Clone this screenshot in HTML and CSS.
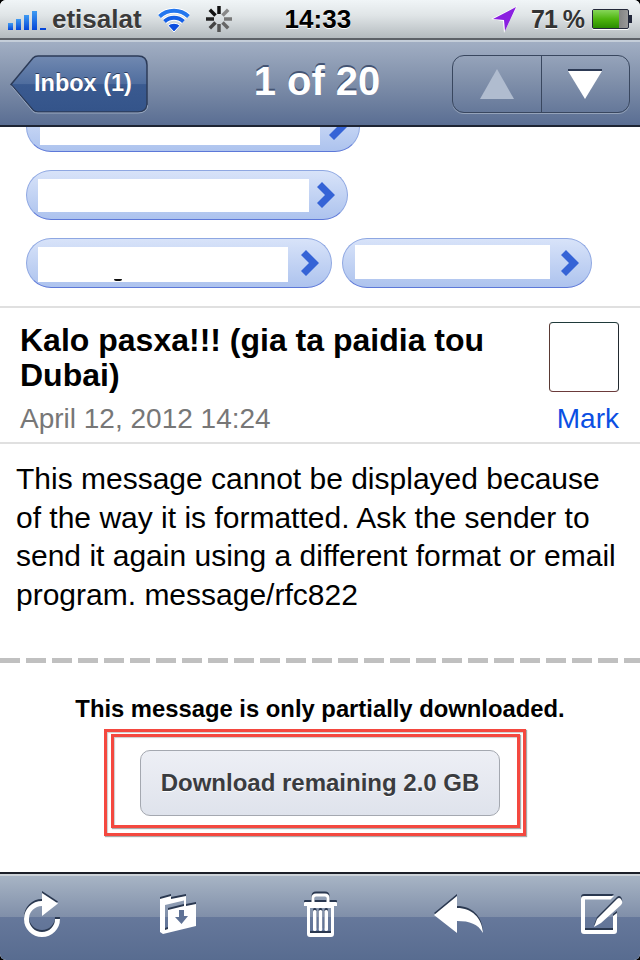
FILE: index.html
```html
<!DOCTYPE html>
<html lang="en">
<head>
    <meta charset="UTF-8">
    <meta name="viewport" content="width=device-width, initial-scale=1.0">
    <title>Message</title>
    <link rel="stylesheet" href="styles.css">
</head>
<body>
<div class="phone">
    <!-- Status bar -->
    <div class="status-bar">
        <svg class="signal" width="38" height="20" viewBox="0 0 38 20">
            <defs>
                <linearGradient id="barBlue" x1="0" y1="0" x2="0" y2="1">
                    <stop offset="0" stop-color="#3f9bf2"/>
                    <stop offset="1" stop-color="#0546d8"/>
                </linearGradient>
            </defs>
            <rect x="0" y="13" width="5" height="7" fill="url(#barBlue)"/>
            <rect x="8" y="9" width="5" height="11" fill="url(#barBlue)"/>
            <rect x="16" y="5" width="5" height="15" fill="url(#barBlue)"/>
            <rect x="24" y="1" width="5" height="19" fill="url(#barBlue)"/>
            <rect x="32" y="18" width="6" height="2" fill="#0546d8"/>
        </svg>
        <span class="carrier">etisalat</span>
        <svg class="wifi" width="32" height="25" viewBox="0 0 32 25">
            <path d="M16 25 L10 18.500 A9 9 0 0 1 22 18.500 Z" fill="#0d4ee0" stroke="#fff" stroke-width="1"/>
            <path d="M6.500 14.500 A14 14 0 0 1 25.500 14.500" fill="none" stroke="#fff" stroke-width="6"/>
            <path d="M1.500 9.500 A21 21 0 0 1 30.500 9.500" fill="none" stroke="#fff" stroke-width="6"/>
            <path d="M6.500 14.500 A14 14 0 0 1 25.500 14.500" fill="none" stroke="#1560e6" stroke-width="4"/>
            <path d="M1.500 9.500 A21 21 0 0 1 30.500 9.500" fill="none" stroke="#2477ee" stroke-width="4"/>
        </svg>
        <svg class="spinner" width="28" height="28" viewBox="0 0 28 28" stroke-width="3.500">
            <path d="M14 1 V9" stroke="#111"/>
            <path d="M23.200 4.800 L17.500 10.500" stroke="#888"/>
            <path d="M27 14 H19" stroke="#777"/>
            <path d="M23.200 23.200 L17.500 17.500" stroke="#666"/>
            <path d="M14 27 V19" stroke="#555"/>
            <path d="M4.800 23.200 L10.500 17.500" stroke="#444"/>
            <path d="M1 14 H9" stroke="#222"/>
            <path d="M4.800 4.800 L10.500 10.500" stroke="#111"/>
        </svg>
        <span class="clock">14:33</span>
        <svg class="location" width="26" height="27" viewBox="0 0 26 27">
            <path d="M26 0 L0 13 L12 15 L13 27 Z" fill="#fff"/>
            <path d="M25 1 L2 13 L13 14 L14 25 Z" fill="#8a1fe0"/>
        </svg>
        <span class="battery-text">71 %</span>
        <div class="battery"><div class="battery-fill"></div></div>
        <div class="battery-tip"></div>
    </div>

    <!-- Navigation bar -->
    <div class="nav-bar">
        <div class="back-button">
            <svg class="back-shape" width="138" height="59" viewBox="0 0 138 59">
                <defs>
                    <linearGradient id="backBlue" x1="0" y1="0" x2="0" y2="1">
                        <stop offset="0" stop-color="#7189b1"/>
                        <stop offset="0.5" stop-color="#4f6d9e"/>
                        <stop offset="0.51" stop-color="#3a5a90"/>
                        <stop offset="1" stop-color="#34548a"/>
                    </linearGradient>
                </defs>
                <path d="M1 29.500 L23 3 Q25 1 28 1 H128 Q137 1 137 10 V49 Q137 57 128 57 H28 Q25 57 23 55 Z" fill="url(#backBlue)" stroke="#2c3b58" stroke-width="1.500"/>
                <path d="M1 30.500 L23 56.500 Q25 58 28 58 H128 Q137 58 138 50" fill="none" stroke="#9aa9c0" stroke-width="1"/>
            </svg>
            <span class="back-label">Inbox (1)</span>
        </div>
        <div class="nav-title">1 of 20</div>
        <div class="segmented">
            <div class="segment">
                <svg width="34" height="30" viewBox="0 0 34 30"><path d="M17 0 L34 30 H0 Z" fill="#b0bccf"/></svg>
            </div>
            <div class="segment segment-next">
                <svg width="34" height="30" viewBox="0 0 34 30"><path d="M0 0 H34 L34 2 L17 30 L0 2 Z" fill="#fff"/><path d="M0 0 H34 V2 H0 Z" fill="#2d3a55"/></svg>
            </div>
        </div>
    </div>

    <!-- Message -->
    <div class="message">
        <div class="recipients">
            <div class="pill-row">
                <div class="pill pill-first">
                    <div class="pill-blank blank-first"></div>
                    <svg class="chevron" width="18" height="26" viewBox="0 0 18 26"><path d="M5 0 L18 13 L5 26 L0 21 L8 13 L0 5 Z" fill="#3563d6"/></svg>
                </div>
            </div>
            <div class="pill-row">
                <div class="pill pill-second">
                    <div class="pill-blank blank-second"></div>
                    <svg class="chevron" width="18" height="26" viewBox="0 0 18 26"><path d="M5 0 L18 13 L5 26 L0 21 L8 13 L0 5 Z" fill="#3563d6"/></svg>
                </div>
            </div>
            <div class="pill-row">
                <div class="pill pill-third">
                    <div class="pill-blank blank-third"></div>
                    <svg class="chevron" width="18" height="26" viewBox="0 0 18 26"><path d="M5 0 L18 13 L5 26 L0 21 L8 13 L0 5 Z" fill="#3563d6"/></svg>
                    <span class="ink-mark"></span>
                </div>
                <div class="pill pill-fourth">
                    <div class="pill-blank blank-fourth"></div>
                    <svg class="chevron" width="18" height="26" viewBox="0 0 18 26"><path d="M5 0 L18 13 L5 26 L0 21 L8 13 L0 5 Z" fill="#3563d6"/></svg>
                </div>
            </div>
        </div>

        <div class="header">
            <div class="header-text">
                <h1>Kalo pasxa!!! (gia ta paidia tou Dubai)</h1>
                <div class="date">April 12, 2012 14:24</div>
            </div>
            <div class="sender">
                <div class="avatar"></div>
                <div class="sender-name">Mark</div>
            </div>
        </div>

        <p class="body-text">This message cannot be displayed because of the way it is formatted. Ask the sender to send it again using a different format or email program. message/rfc822</p>

        <div class="dashed"></div>

        <p class="partial">This message is only partially downloaded.</p>
        <div class="highlight">
            <div class="highlight-inner">
                <div class="download-button">Download remaining 2.0 GB</div>
            </div>
        </div>
    </div>

    <!-- Toolbar -->
    <div class="toolbar">
        <svg class="tool-icon tool-refresh" width="36" height="44" viewBox="0 0 36 44">
            <path d="M33.500 26 A15.500 15.500 0 1 1 18 10.500" fill="none" stroke="#fff" stroke-width="5"/>
            <path d="M18 0 L34 10.500 L18 23 Z" fill="#fff"/>
        </svg>
        <svg class="tool-icon tool-folder" width="36" height="38" viewBox="0 0 36 38">
            <path d="M0 3 L11 0 V3 L26 0 V10 L36 8 V30 L3 38 L0 36 Z M5 9 L24 4.500 V10 L8 14 V33 L5 34 Z" fill="#fff" fill-rule="evenodd"/>
            <path d="M19 14 H24 V20 H28 L21.500 28 L15 21 H19 Z" fill="#5f7296"/>
        </svg>
        <svg class="tool-icon tool-trash" width="33" height="44" viewBox="0 0 33 44">
            <path d="M0 10 Q0 9 1 9 H32 Q33 9 33 10 V13 H0 Z" fill="#fff"/>
            <path d="M9 9 V5 Q9 2 12 2 H21 Q24 2 24 5 V9" fill="none" stroke="#fff" stroke-width="3"/>
            <path d="M3 13 H30 V41 Q30 44 27 44 H6 Q3 44 3 41 Z M6 15 V40 H27 V15 Z" fill="#fff" fill-rule="evenodd"/>
            <rect x="9" y="17" width="3.500" height="21" rx="1.500" fill="#fff"/>
            <rect x="14.750" y="17" width="3.500" height="21" rx="1.500" fill="#fff"/>
            <rect x="20.500" y="17" width="3.500" height="21" rx="1.500" fill="#fff"/>
        </svg>
        <svg class="tool-icon tool-reply" width="50" height="38" viewBox="0 0 50 38">
            <path d="M23 0 V12 C38 12 48 22 49 37 C44 28 36 25 23 25 V37 L0 19 Z" fill="#fff"/>
        </svg>
        <svg class="tool-icon tool-compose" width="42" height="38" viewBox="0 0 42 38">
            <path d="M3 0 H33 L29.500 3.500 H4 V34 H32 V20 L36 17 V35 Q36 38 33 38 H3 Q0 38 0 35 V3 Q0 0 3 0 Z" fill="#fff"/>
            <path d="M36 3 Q38 1 40 3 L41 5 Q42 7 40 9 L20 27 L13 31 L16 23 Z" fill="#fff"/>
        </svg>
    </div>
</div>
</body>
</html>
```

FILE: styles.css
```css
html, body {
    margin: 0;
    padding: 0;
    background: #000;
}

body {
    font-family: 'Liberation Sans', Arial, sans-serif;
    color: #000;
}

.phone {
    width: 640px;
    height: 960px;
    display: flex;
    flex-direction: column;
    overflow: hidden;
    border-radius: 6px;
    background: #fff;
}

/* Status bar */
.status-bar {
    height: 38px;
    flex: none;
    display: flex;
    align-items: center;
    padding-left: 8px;
    background: linear-gradient(to bottom, #f0f5f7, #e0e5e7 40%, #b4bbbf);
    border-bottom: 2px solid #5d6268;
    color: #333;
}

.signal {
    margin-top: 1px;
}

.carrier {
    margin-left: 6px;
    font-size: 26px;
    font-weight: bold;
    color: #3a3a3a;
    text-shadow: 0 1px 0 #fff;
}

.wifi {
    margin-left: 16px;
}

.spinner {
    margin-left: 15px;
}

.clock {
    margin-left: 52px;
    font-size: 26px;
    font-weight: bold;
    color: #000;
    text-shadow: 0 1px 0 #fff;
}

.location {
    margin-left: 140px;
}

.battery-text {
    margin-left: 14px;
    font-size: 25px;
    letter-spacing: -1px;
    font-weight: bold;
    color: #333;
    text-shadow: 0 1px 0 #fff;
}

.battery {
    margin-left: 8px;
    width: 35px;
    height: 18px;
    border: 1.500px solid #23283a;
    border-radius: 2px;
    background: linear-gradient(to right, #444, #999);
    box-shadow: 0 1px 0 #fff;
}

.battery-fill {
    width: 26px;
    height: 18px;
    background: linear-gradient(to bottom, #86d65a, #4eb50e 50%, #2a8c00);
}

.battery-tip {
    width: 3px;
    height: 8px;
    background: #23283a;
}

/* Nav bar */
.nav-bar {
    height: 87px;
    flex: none;
    box-sizing: border-box;
    display: flex;
    align-items: center;
    justify-content: space-between;
    position: relative;
    padding: 1px 10px 0 10px;
    background: linear-gradient(to bottom, #a1aec3, #7e8ea9 50%, #5a6e93);
    border-top: 2px solid #c5ced9;
    border-bottom: 2px solid #1d2433;
}

.back-button {
    width: 138px;
    height: 59px;
    position: relative;
}

.back-shape {
    position: absolute;
    left: 0;
    top: 0;
}

.back-label {
    position: absolute;
    left: 24px;
    top: 15px;
    font-size: 23.500px;
    font-weight: bold;
    color: #fff;
    text-shadow: 0 -1px 0 #2a3b5c;
    white-space: nowrap;
}

.nav-title {
    font-size: 40px;
    font-weight: bold;
    color: #fff;
    text-shadow: 0 -2px 0 #445473;
    margin: 0 0 6px 34px;
}

.segmented {
    width: 178px;
    height: 58px;
    box-sizing: border-box;
    display: flex;
    border: 1.500px solid #39475f;
    border-radius: 12px;
    box-shadow: 0 1px 0 #95a3ba;
}

.segment {
    flex: 1;
    display: flex;
    align-items: center;
    justify-content: center;
}

.segment-next {
    border-left: 1.500px solid #39475f;
}

/* Message */
.message {
    flex: 1;
    min-height: 0;
    overflow: hidden;
    background: #fff;
}

.recipients {
    display: flex;
    flex-direction: column;
    gap: 18px;
    padding: 0 0 18px 26px;
    border-bottom: 2px solid #e0e0e0;
}

.pill-row {
    display: flex;
    gap: 10px;
}

.pill {
    position: relative;
    height: 50px;
    box-sizing: border-box;
    display: flex;
    align-items: center;
    justify-content: space-between;
    padding: 0 12px 0 11px;
    border: 1px solid #8ea7e2;
    border-bottom-color: #5d78d8;
    border-radius: 25px;
    background: linear-gradient(to bottom, #d8e3f9, #adc3ee);
}

.pill-blank {
    background: #fff;
}

.pill-first {
    width: 334px;
    margin-top: -25px;
}

.blank-first {
    width: 280px;
    height: 36px;
    margin-left: 2px;
}

.pill-second {
    width: 322px;
}

.blank-second {
    width: 271px;
    height: 33px;
}

.pill-third {
    width: 306px;
}

.blank-third {
    width: 250px;
    height: 35px;
    margin-top: 3px;
}

.pill-fourth {
    width: 250px;
}

.blank-fourth {
    width: 195px;
    height: 34px;
    margin: 0 0 3px 1px;
}

.ink-mark {
    position: absolute;
    left: 87px;
    top: 40px;
    width: 8px;
    height: 2px;
    border-radius: 0 0 4px 4px;
    background: #111;
}

/* Header */
.header {
    display: flex;
    justify-content: space-between;
    height: 136px;
    box-sizing: border-box;
    padding: 14px 20px 0 20px;
    border-bottom: 2px solid #e0e0e0;
}

.header-text {
    width: 500px;
    padding-top: 1px;
}

h1 {
    margin: 0;
    font-size: 32px;
    line-height: 35px;
    font-weight: bold;
}

.date {
    margin-top: 10px;
    font-size: 28px;
    color: #777;
}

.sender {
    width: 72px;
    margin-right: 1px;
    display: flex;
    flex-direction: column;
    align-items: flex-end;
}

.avatar {
    width: 70px;
    height: 70px;
    box-sizing: border-box;
    background: #fff;
    border: 1px solid;
    border-color: #1f3a3a #222a30 #6b3a3a #5a3a34;
    border-radius: 4px;
}

.sender-name {
    margin-top: 11px;
    font-size: 28px;
    color: #0b4fe3;
}

.body-text {
    margin: 16px 10px 0 16px;
    font-size: 30px;
    line-height: 38.500px;
}

.dashed {
    margin-top: 44px;
    height: 5px;
    background: repeating-linear-gradient(to right, #c0c0c0 0, #c0c0c0 20px, #fff 20px, #fff 26px);
}

.partial {
    margin: 32px 0 0 0;
    text-align: center;
    font-size: 23.800px;
    font-weight: bold;
}

.highlight {
    width: 422px;
    height: 107px;
    box-sizing: border-box;
    margin: 6px 0 0 104px;
    padding: 2px 2px 0 4px;
    border: 3px solid #f4483f;
    box-shadow: 1px 1px 1px #aaa, inset 1px 1px 1px #ccc;
}

.highlight-inner {
    width: 409px;
    height: 94px;
    box-sizing: border-box;
    padding: 13px 0 0 26px;
    border: 3px solid #f4483f;
    box-shadow: 1px 1px 1px #aaa, inset 1px 1px 1px #ccc;
}

.download-button {
    width: 360px;
    height: 66px;
    box-sizing: border-box;
    display: flex;
    align-items: center;
    justify-content: center;
    border: 1px solid #a4a8b0;
    border-radius: 10px;
    background: linear-gradient(to bottom, #edeff5, #dfe3ec);
    font-size: 24px;
    font-weight: bold;
    color: #3a3c40;
    text-shadow: 0 1px 0 #fff;
}

/* Toolbar */
.toolbar {
    height: 88px;
    flex: none;
    box-sizing: border-box;
    display: flex;
    align-items: center;
    padding: 0 0 4px 24px;
    background: linear-gradient(to bottom, #a9b6c6, #808fa9 50%, #66789b 50%, #586c90);
    border-top: 2px solid #1b1f28;
    box-shadow: inset 0 2px 0 #ccd2d8;
}

.tool-icon {
    flex: none;
    filter: drop-shadow(0 -2px 0 #2a3850);
}

.tool-folder {
    margin-left: 100px;
}

.tool-trash {
    margin-left: 108px;
}

.tool-reply {
    margin-left: 97px;
}

.tool-compose {
    margin-left: 97px;
}
```
